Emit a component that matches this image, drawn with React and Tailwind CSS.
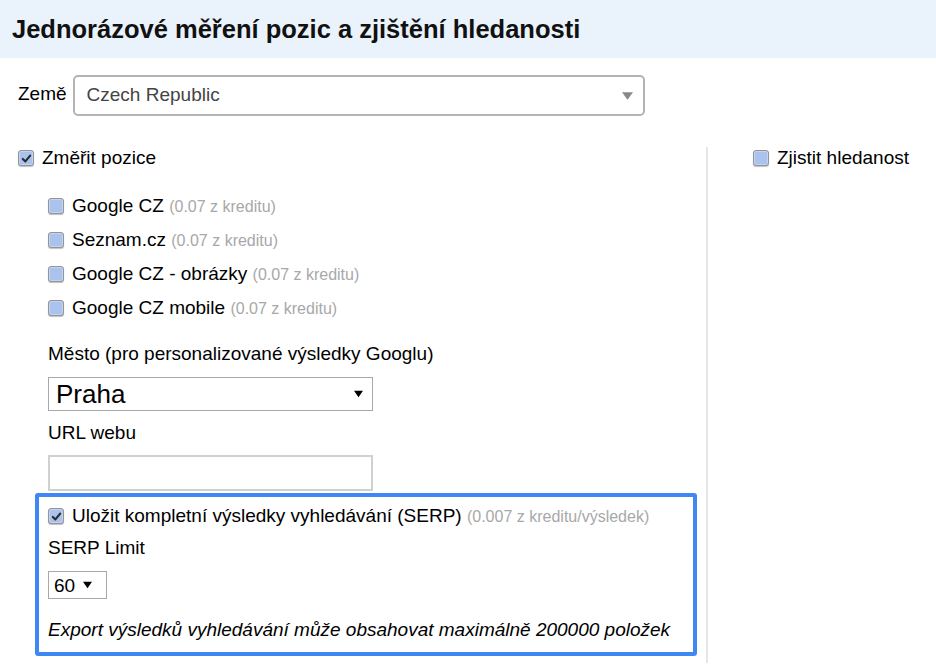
import React from "react";

const FONT = { fontFamily: '"Liberation Sans", Arial, sans-serif' };

function Box({ checked }) {
  return (
    <span className="inline-flex h-[16px] w-[16px] shrink-0 items-center justify-center rounded-[3px] border border-[#949494] bg-[#a9c2ee] shadow-[0_1px_1px_rgba(0,0,0,0.25),inset_0_0_0_1px_#c4d4f2]">
      {checked && (
        <svg viewBox="0 0 12 12" className="h-[11px] w-[11px]">
          <path d="M2 6.5 L4.8 9.2 L10 2.8" fill="none" stroke="#2b2b2b" strokeWidth="2.3" strokeLinecap="round" strokeLinejoin="round" />
        </svg>
      )}
    </span>
  );
}

function Caret({ color, w = 10, h = 7 }) {
  return (
    <svg width={w} height={h} viewBox="0 0 10 7">
      <path d="M0 0 H10 L5 7 Z" fill={color} />
    </svg>
  );
}

const ENGINES = ["Google CZ", "Seznam.cz", "Google CZ - obrázky", "Google CZ mobile"];

export default function App() {
  return (
    <div className="h-[672px] w-[936px] overflow-hidden bg-white text-black" style={FONT}>
      {/* header */}
      <div className="flex h-[58px] items-center bg-[#eaf2fb] px-3">
        <h1 className="text-[25.5px] font-bold text-[#111]">Jednorázové měření pozic a zjištění hledanosti</h1>
      </div>

      {/* country */}
      <div className="mt-[17px] flex items-center pl-[18px]">
        <span className="-mt-[3px] text-[19px] leading-[22px]">Země</span>
        <div className="ml-[6px] flex h-[41px] w-[572px] items-center justify-between rounded-[5px] border-2 border-[#b4b4b4] pl-3 pr-[10px]">
          <span className="text-[19px] text-[#444]">Czech Republic</span>
          <Caret color="#888" w={11} h={8} />
        </div>
      </div>

      <div className="mt-[31px] flex">
        {/* left column */}
        <div className="w-[706px] pb-[7px] pl-[18px]">
          <label className="flex h-[22px] items-center gap-[8px]">
            <Box checked />
            <span className="text-[19px] leading-[22px]">Změřit pozice</span>
          </label>

          <div className="mt-[26px] flex flex-col gap-[12px] pl-[30px]">
            {ENGINES.map((e) => (
              <label key={e} className="flex h-[22px] items-center gap-[8px]">
                <Box />
                <span className="whitespace-nowrap text-[19px] leading-[22px]">
                  {e} <span className="text-[16px] text-[#a8a8a8]">(0.07 z kreditu)</span>
                </span>
              </label>
            ))}
          </div>

          <div className="pl-[30px]">
            <div className="mt-[24px] text-[19px] leading-[22px]">Město (pro personalizované výsledky Googlu)</div>
            <div className="mt-[12px] flex h-[34px] w-[325px] items-center justify-between border border-[#a9a9a9] pl-[7px] pr-[9px]">
              <span className="text-[26px] leading-none">Praha</span>
              <Caret color="#000" w={9} h={8} />
            </div>
            <div className="mt-[11px] text-[19px] leading-[22px]">URL webu</div>
            <div className="mt-[11px] h-[36px] w-[325px] border-2 border-[#d0d0d0]" />
          </div>

          <div className="ml-[17px] mt-[2px] w-[662px] rounded-[3px] border-4 border-[#3f87f5] pb-[11px] pl-[9px] pt-[8px]">
            <label className="flex h-[22px] items-center gap-[8px]">
              <Box checked />
              <span className="whitespace-nowrap text-[19px] leading-[22px]">
                Uložit kompletní výsledky vyhledávání (SERP){" "}
                <span className="text-[16px] text-[#a8a8a8]">(0.007 z kreditu/výsledek)</span>
              </span>
            </label>
            <div className="mt-[10px] text-[19px] leading-[22px]">SERP Limit</div>
            <div className="mt-[12px] flex h-[28px] w-[59px] items-center border border-[#a9a9a9] pl-[5px] text-[19px] leading-none">
              60 <span className="ml-[8px] inline-flex"><Caret color="#000" w={9} h={8} /></span>
            </div>
            <div className="mt-[20px] whitespace-nowrap text-[19px] italic leading-[22px]">
              Export výsledků vyhledávání může obsahovat maximálně 200000 položek
            </div>
          </div>
        </div>

        {/* right column */}
        <div className="flex-1 border-l-2 border-[#e6e6e6] pl-[45px]">
          <label className="flex h-[22px] items-center gap-[8px]">
            <Box />
            <span className="text-[19px] leading-[22px]">Zjistit hledanost</span>
          </label>
        </div>
      </div>
    </div>
  );
}
